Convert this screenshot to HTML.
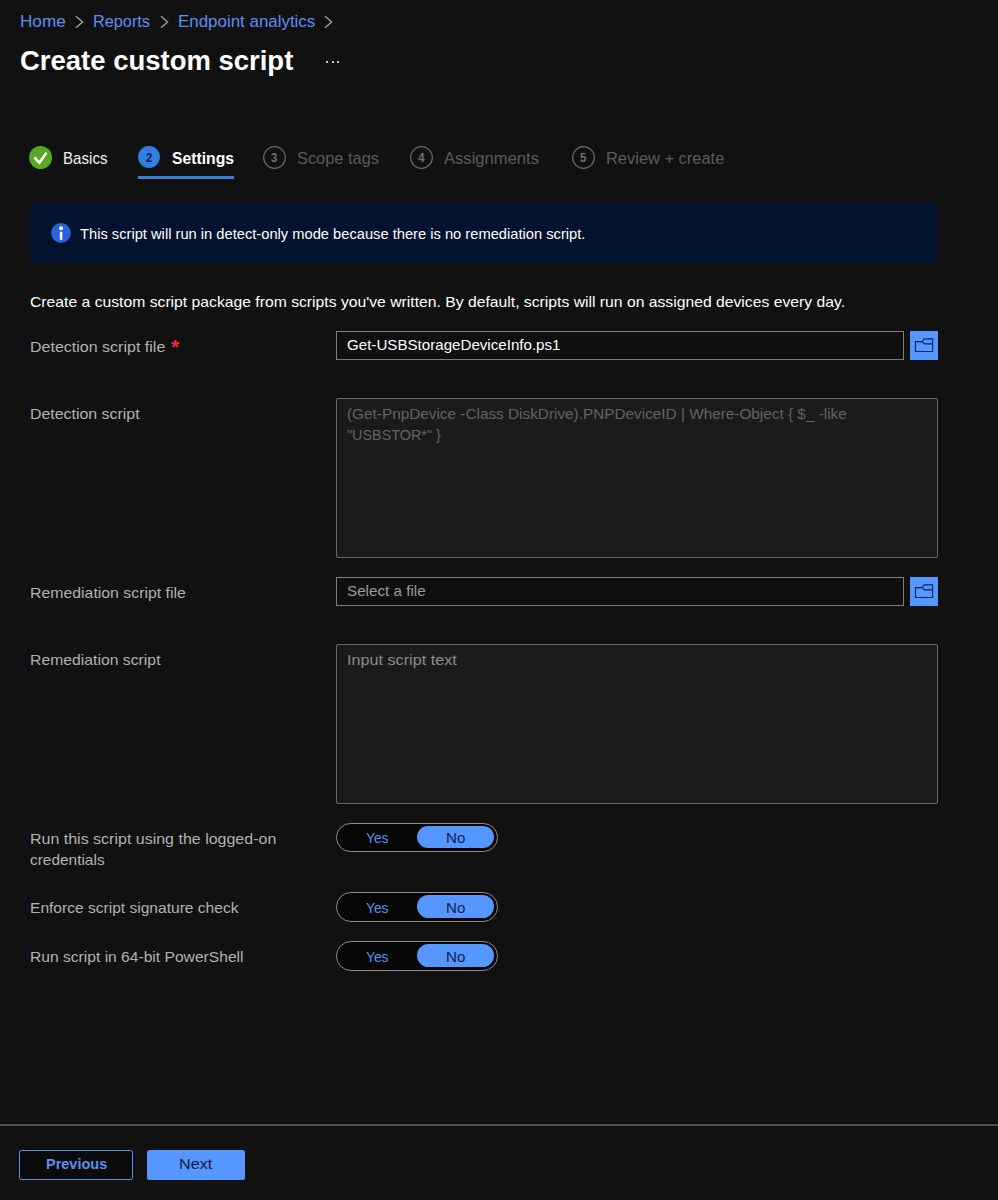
<!DOCTYPE html>
<html><head><meta charset="utf-8">
<style>
*{box-sizing:border-box;margin:0;padding:0}
html,body{width:998px;height:1200px;background:#111111;overflow:hidden}
body{font-family:"Liberation Sans",sans-serif;color:#fff;position:relative}
.a{position:absolute;white-space:nowrap;line-height:1}
.t{transform-origin:0 50%}
.inp{position:absolute;border:1px solid #7e7e7e;background:#0f0f0f}
.ta{position:absolute;border:1px solid #686868;background:#1b1b1b;border-radius:2px}
.fbtn{position:absolute;width:28px;height:29px;background:#5596ff}
.tog{position:absolute;left:336px;width:162px;height:29.6px;border:1.6px solid #8e8e8e;border-radius:15px;background:#060606}
.tog i{position:absolute;left:79.8px;top:2.2px;width:77px;height:22.6px;border-radius:12px;background:#5596ff}
</style></head><body>
<!-- breadcrumb chevrons -->
<svg class="a" style="left:75px;top:15px" width="9" height="14" viewBox="0 0 9 14"><path d="M1 1.2l6.6 5.8-6.6 5.8" fill="none" stroke="#a6a6a6" stroke-width="1.3"/></svg>
<svg class="a" style="left:159.5px;top:15px" width="9" height="14" viewBox="0 0 9 14"><path d="M1 1.2l6.6 5.8-6.6 5.8" fill="none" stroke="#a6a6a6" stroke-width="1.3"/></svg>
<svg class="a" style="left:324px;top:15px" width="9" height="14" viewBox="0 0 9 14"><path d="M1 1.2l6.6 5.8-6.6 5.8" fill="none" stroke="#a6a6a6" stroke-width="1.3"/></svg>
<!-- ellipsis -->
<div class="a" style="left:326.3px;top:60.6px;width:2px;height:2px;background:#c4c4c4"></div>
<div class="a" style="left:331.6px;top:60.6px;width:2px;height:2px;background:#c4c4c4"></div>
<div class="a" style="left:336.9px;top:60.6px;width:2px;height:2px;background:#c4c4c4"></div>

<!-- tabs -->
<svg class="a" style="left:29px;top:145.7px" width="23" height="23" viewBox="0 0 23 23"><circle cx="11.6" cy="11.5" r="11.5" fill="#57a822"/><path d="M5.4 11.5l5 5.2 7.1-10" fill="none" stroke="#fff" stroke-width="2.6"/></svg>
<svg class="a" style="left:138.4px;top:146.3px" width="22" height="22" viewBox="0 0 22 22"><circle cx="11" cy="11" r="10.9" fill="#2f80e0"/></svg>
<div class="a" style="left:138px;top:176px;width:96px;height:3.3px;background:#3681d3"></div>
<svg class="a" style="left:263px;top:145.7px" width="23" height="23" viewBox="0 0 23 23"><circle cx="11.5" cy="11.5" r="10.8" fill="none" stroke="#6a6a6a" stroke-width="1.2"/></svg>
<svg class="a" style="left:410px;top:145.7px" width="23" height="23" viewBox="0 0 23 23"><circle cx="11.5" cy="11.5" r="10.8" fill="none" stroke="#6a6a6a" stroke-width="1.2"/></svg>
<svg class="a" style="left:571.5px;top:145.7px" width="23" height="23" viewBox="0 0 23 23"><circle cx="11.5" cy="11.5" r="10.8" fill="none" stroke="#6a6a6a" stroke-width="1.2"/></svg>

<!-- info banner -->
<div class="a" style="left:29.5px;top:202.5px;width:908.5px;height:61.5px;background:#03122e"></div>
<svg class="a" style="left:50.6px;top:223px" width="20" height="20" viewBox="0 0 20 20"><circle cx="10" cy="10" r="9.9" fill="#2b63dc"/><rect x="8.8" y="8.8" width="2.5" height="8" fill="#fff"/><circle cx="10" cy="5.3" r="2" fill="#fff"/></svg>

<!-- form -->
<div class="inp" style="left:336px;top:331px;width:568px;height:28.5px"></div>
<div class="fbtn" style="left:910px;top:330.5px"><svg width="28" height="29" viewBox="0 0 28 29" style="position:absolute;left:0;top:0"><path d="M5.5 10.6H12L14.4 7.9H22.6V20.5H5.5Z M12 10.6L14.4 12.8H22.6" fill="none" stroke="#0a2660" stroke-width="1.2"/></svg></div>
<div class="ta" style="left:336px;top:398px;width:602px;height:160px"></div>
<div class="inp" style="left:336px;top:577px;width:568px;height:28.5px"></div>
<div class="fbtn" style="left:910px;top:576.5px"><svg width="28" height="29" viewBox="0 0 28 29" style="position:absolute;left:0;top:0"><path d="M5.5 10.6H12L14.4 7.9H22.6V20.5H5.5Z M12 10.6L14.4 12.8H22.6" fill="none" stroke="#0a2660" stroke-width="1.2"/></svg></div>
<div class="ta" style="left:336px;top:644px;width:602px;height:160px"></div>

<div class="tog" style="top:822.5px"><i></i></div>
<div class="tog" style="top:892px"><i></i></div>
<div class="tog" style="top:941px"><i></i></div>

<!-- footer -->
<div class="a" style="left:0;top:1124px;width:998px;height:2px;background:#505050"></div>
<div class="a" style="left:19px;top:1150px;width:113.5px;height:30px;border:1.3px solid #5b8ff2;border-radius:2.5px;background:#0b0b0b"></div>
<div class="a" style="left:146.8px;top:1150px;width:98.2px;height:30px;background:#5596ff;border-radius:2.5px"></div>

<div class="a t" id="t0" style="left:20.0px;top:13px;font-size:17px;font-weight:normal;color:#5b8ff2;transform:scaleX(1.0075)">Home</div>
<div class="a t" id="t1" style="left:93.0px;top:13px;font-size:17px;font-weight:normal;color:#5b8ff2;transform:scaleX(0.9575)">Reports</div>
<div class="a t" id="t2" style="left:178.0px;top:13px;font-size:17px;font-weight:normal;color:#5b8ff2;transform:scaleX(0.9950)">Endpoint analytics</div>
<div class="a t" id="t3" style="left:20.0px;top:47px;font-size:28px;font-weight:bold;color:#ffffff;transform:scaleX(0.9812)">Create custom script</div>
<div class="a t" id="t4" style="left:63.3px;top:150px;font-size:17px;font-weight:normal;color:#f2f2f2;transform:scaleX(0.8886)">Basics</div>
<div class="a t" id="t5" style="left:172.0px;top:150px;font-size:17px;font-weight:bold;color:#ffffff;transform:scaleX(0.9245)">Settings</div>
<div class="a t" id="t6" style="left:297.4px;top:150px;font-size:17px;font-weight:normal;color:#5b5b5b;transform:scaleX(0.9640)">Scope tags</div>
<div class="a t" id="t7" style="left:444.3px;top:150px;font-size:17px;font-weight:normal;color:#5b5b5b;transform:scaleX(0.9761)">Assignments</div>
<div class="a t" id="t8" style="left:606.2px;top:150px;font-size:17px;font-weight:normal;color:#5b5b5b;transform:scaleX(0.9667)">Review + create</div>
<div class="a t" id="t9" style="left:146.0px;top:151px;font-size:13px;font-weight:bold;color:#0a1a50;transform:scaleX(0.8708)">2</div>
<div class="a t" id="t10" style="left:271.3px;top:151px;font-size:13px;font-weight:bold;color:#707070;transform:scaleX(0.8708)">3</div>
<div class="a t" id="t11" style="left:418.2px;top:151px;font-size:13px;font-weight:bold;color:#707070;transform:scaleX(0.9123)">4</div>
<div class="a t" id="t12" style="left:580.0px;top:151px;font-size:13px;font-weight:bold;color:#707070;transform:scaleX(0.8708)">5</div>
<div class="a t" id="t13" style="left:80.3px;top:226px;font-size:15px;font-weight:normal;color:#ffffff;transform:scaleX(0.9793)">This script will run in detect-only mode because there is no remediation script.</div>
<div class="a t" id="t14" style="left:30.2px;top:294px;font-size:15px;font-weight:normal;color:#ffffff;transform:scaleX(1.0477)">Create a custom script package from scripts you've written. By default, scripts will run on assigned devices every day.</div>
<div class="a t" id="t15" style="left:30.2px;top:339px;font-size:15px;font-weight:normal;color:#b2b2b2;transform:scaleX(1.0677)">Detection script file</div>
<div class="a t" id="t16" style="left:170.5px;top:337px;font-size:20px;font-weight:bold;color:#e5323e;transform:scaleX(1.0517)">*</div>
<div class="a t" id="t17" style="left:347.2px;top:337px;font-size:15px;font-weight:normal;color:#ffffff;transform:scaleX(1.0081)">Get-USBStorageDeviceInfo.ps1</div>
<div class="a t" id="t18" style="left:30.2px;top:406px;font-size:15px;font-weight:normal;color:#b2b2b2;transform:scaleX(1.0602)">Detection script</div>
<div class="a t" id="t19" style="left:347.2px;top:406px;font-size:15px;font-weight:normal;color:#636363;transform:scaleX(1.0220)">(Get-PnpDevice -Class DiskDrive).PNPDeviceID | Where-Object { $_ -like</div>
<div class="a t" id="t20" style="left:347.2px;top:427px;font-size:15px;font-weight:normal;color:#636363;transform:scaleX(0.9581)">"USBSTOR*" }</div>
<div class="a t" id="t21" style="left:30.2px;top:585px;font-size:15px;font-weight:normal;color:#b2b2b2;transform:scaleX(1.0558)">Remediation script file</div>
<div class="a t" id="t22" style="left:347.2px;top:583px;font-size:15px;font-weight:normal;color:#9a9a9a;transform:scaleX(1.0136)">Select a file</div>
<div class="a t" id="t23" style="left:30.2px;top:652px;font-size:15px;font-weight:normal;color:#b2b2b2;transform:scaleX(1.0506)">Remediation script</div>
<div class="a t" id="t24" style="left:347.2px;top:652px;font-size:15px;font-weight:normal;color:#8c8c8c;transform:scaleX(1.0794)">Input script text</div>
<div class="a t" id="t25" style="left:30.4px;top:831px;font-size:15px;font-weight:normal;color:#b2b2b2;transform:scaleX(1.0663)">Run this script using the logged-on</div>
<div class="a t" id="t26" style="left:30.4px;top:852px;font-size:15px;font-weight:normal;color:#b2b2b2;transform:scaleX(1.0283)">credentials</div>
<div class="a t" id="t27" style="left:30.4px;top:900px;font-size:15px;font-weight:normal;color:#b2b2b2;transform:scaleX(1.0376)">Enforce script signature check</div>
<div class="a t" id="t28" style="left:30.4px;top:949px;font-size:15px;font-weight:normal;color:#b2b2b2;transform:scaleX(1.0410)">Run script in 64-bit PowerShell</div>
<div class="a t" id="t29" style="left:45.7px;top:1156px;font-size:15px;font-weight:bold;color:#5b8ff2;transform:scaleX(0.9657)">Previous</div>
<div class="a t" id="t30" style="left:179.4px;top:1156px;font-size:15px;font-weight:normal;color:#141c3a;transform:scaleX(1.0796)">Next</div>
<div class="a t" id="t31" style="left:366.0px;top:830px;font-size:15px;font-weight:normal;color:#5b8ff2;transform:scaleX(0.9190)">Yes</div>
<div class="a t" id="t32" style="left:445.9px;top:830px;font-size:15px;font-weight:normal;color:#14204a;transform:scaleX(1.0111)">No</div>
<div class="a t" id="t33" style="left:366.0px;top:900px;font-size:15px;font-weight:normal;color:#5b8ff2;transform:scaleX(0.9190)">Yes</div>
<div class="a t" id="t34" style="left:445.9px;top:900px;font-size:15px;font-weight:normal;color:#14204a;transform:scaleX(1.0111)">No</div>
<div class="a t" id="t35" style="left:366.0px;top:949px;font-size:15px;font-weight:normal;color:#5b8ff2;transform:scaleX(0.9190)">Yes</div>
<div class="a t" id="t36" style="left:445.9px;top:949px;font-size:15px;font-weight:normal;color:#14204a;transform:scaleX(1.0111)">No</div>
</body></html>
